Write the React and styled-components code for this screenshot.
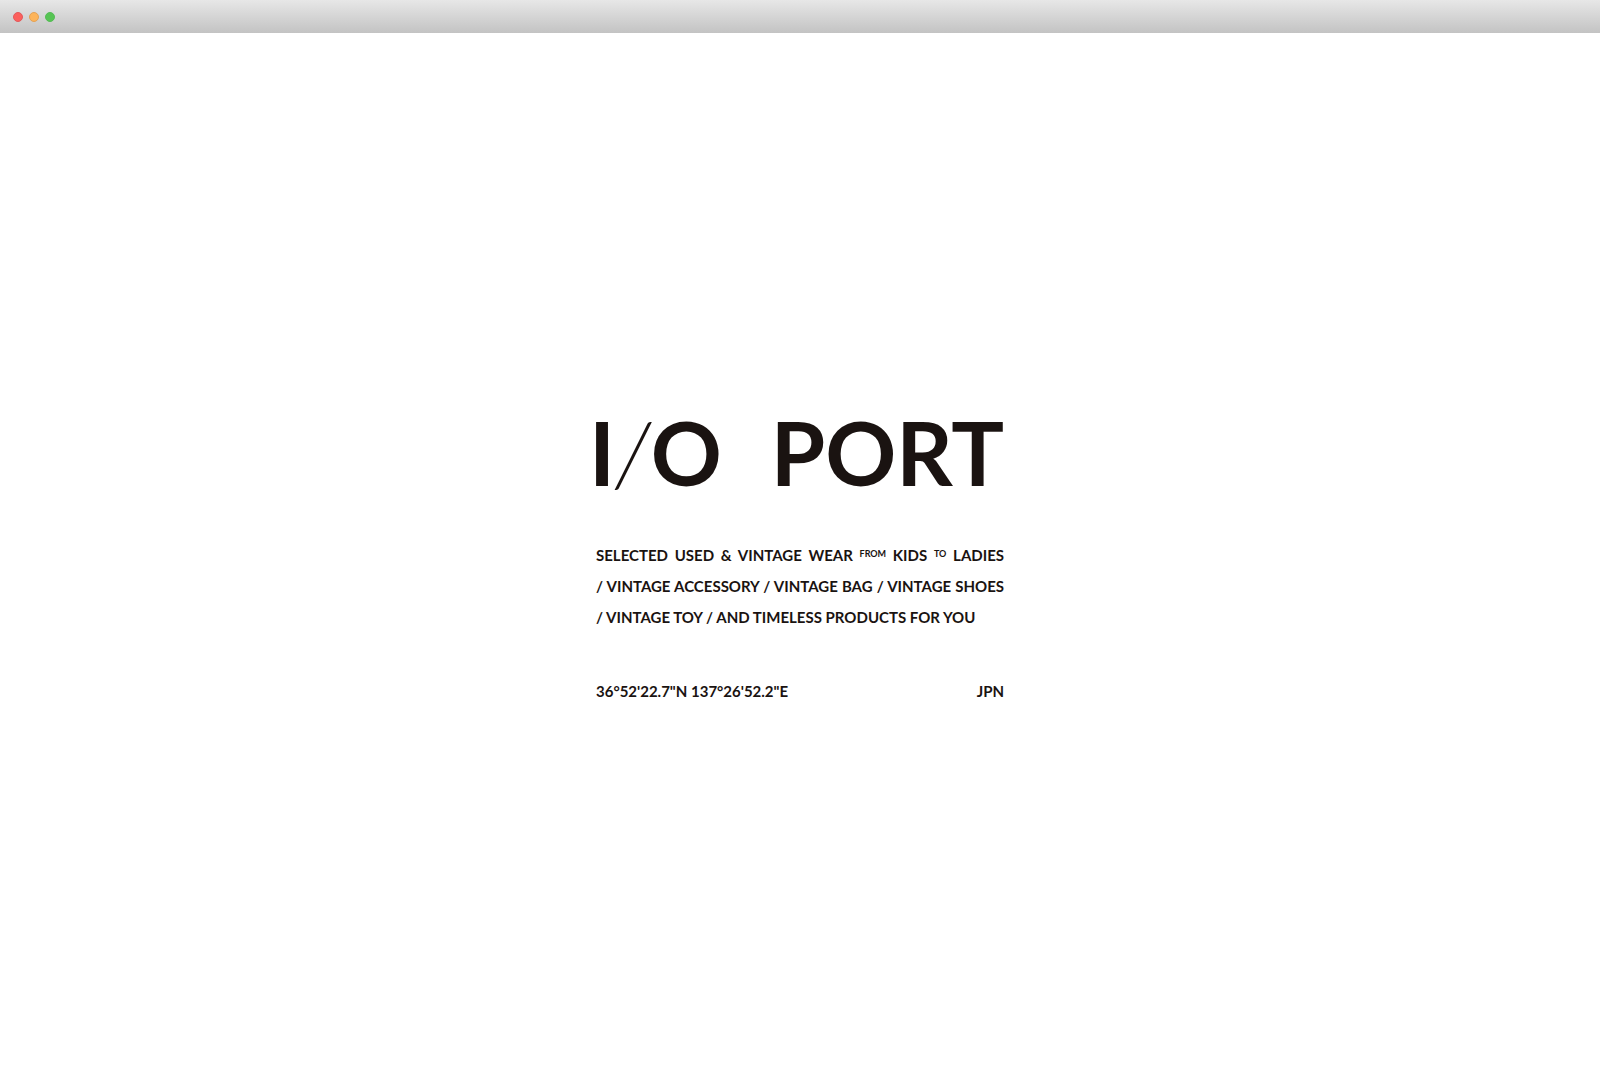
import styled, { createGlobalStyle } from "styled-components";

function App() {
  return (
    <>
      <GlobalStyle />
      <Page>
        <TitleBar>
          <Dot $fill="#fc605c" $edge="#e25a5c" />
          <Dot $fill="#fdb45a" $edge="#e3a257" />
          <Dot $fill="#57c454" $edge="#55bc55" />
        </TitleBar>
        <Main>
          <Card>
            <Logo>
              <span>
                I<Slash>/</Slash>O
              </span>
              <span>PORT</span>
            </Logo>
            <Intro>
              <Line $full>
                SELECTED USED &amp; VINTAGE WEAR <Small>FROM</Small> KIDS{" "}
                <Small>TO</Small> LADIES
              </Line>
              <Line $full>
                / VINTAGE ACCESSORY / VINTAGE BAG / VINTAGE SHOES
              </Line>
              <Line>/ VINTAGE TOY / AND TIMELESS PRODUCTS FOR YOU</Line>
            </Intro>
            <Place>
              <span>36°52'22.7"N 137°26'52.2"E</span>
              <span>JPN</span>
            </Place>
          </Card>
        </Main>
      </Page>
    </>
  );
}

const GlobalStyle = createGlobalStyle`
  * {
    box-sizing: border-box;
  }
  body {
    margin: 0;
    background: #fff;
    color: #1a1311;
    font-family: Lato, "Open Sans", sans-serif;
  }
`;

const Page = styled.div`
  display: flex;
  flex-direction: column;
  min-height: 100vh;
`;

const TitleBar = styled.header`
  display: flex;
  align-items: center;
  gap: 6px;
  height: 33px;
  padding: 0 13px;
  background: linear-gradient(#e7e7e7, #c3c3c3);
`;

const Dot = styled.span`
  width: 10px;
  height: 10px;
  border: 1px solid ${(props) => props.$edge};
  border-radius: 50%;
  background: ${(props) => props.$fill};
`;

const Main = styled.main`
  flex: 1;
  display: flex;
  align-items: center;
  justify-content: center;
  padding: 28px 24px 0;
`;

const Card = styled.section`
  width: 100%;
  max-width: 408px;
`;

// pulled left so the stem of the I lines up with the text below
const Logo = styled.h1`
  display: flex;
  justify-content: space-between;
  margin: 0 0 0 -7px;
  font-size: 88px;
  font-weight: 700;
  line-height: 64px;
`;

const Slash = styled.span`
  font-style: italic;
  font-weight: 300;
`;

const Intro = styled.div`
  margin-top: 56px;
`;

const Line = styled.p`
  margin: 0;
  font-size: 15px;
  font-weight: 700;
  line-height: 31px;
  text-align-last: ${(props) => (props.$full ? "justify" : "left")};
`;

const Small = styled.small`
  font-size: 9px;
  line-height: 1;
  vertical-align: 4px;
`;

const Place = styled.footer`
  display: flex;
  justify-content: space-between;
  margin-top: 43px;
  font-size: 15px;
  font-weight: 700;
  line-height: 31px;
`;

export default App;
